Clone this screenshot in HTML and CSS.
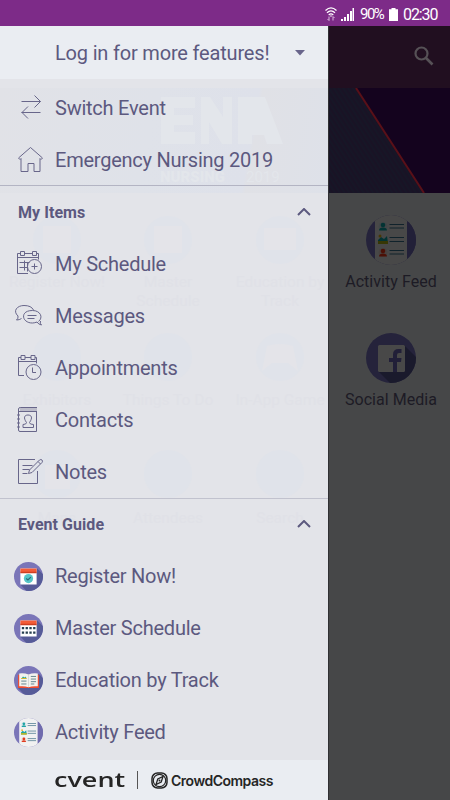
FILE: index.html
```html
<!DOCTYPE html>
<html lang="en">
<head>
  <meta charset="UTF-8" />
  <meta name="viewport" content="width=device-width, initial-scale=1" />
  <title>Emergency Nursing 2019</title>
  <link rel="stylesheet" href="styles.css">
</head>
<body>

  <!-- Shared round icons -->
  <svg class="defs" width="0" height="0">
    <clipPath id="disc"><circle cx="25" cy="25" r="25" /></clipPath>
    <symbol id="feed" viewBox="0 0 50 50">
      <g clip-path="url(#disc)">
        <rect width="50" height="50" fill="#7a75b8" />
        <rect x="9" width="32" height="50" fill="#f1f1f1" />
        <path d="M41 6v38l9-10V12z" fill="#706bad" />
        <circle cx="17" cy="11.5" r="4.5" fill="#dbe6ea" />
        <circle cx="17" cy="10" r="2.3" fill="#20a5a5" />
        <path d="M13 15.5q0-3 4-3t4 3z" fill="#20a5a5" />
        <path d="M12 28v-3l3-3 3 2 3-3 1 7z" fill="#20a5a5" />
        <path d="M12 26h10v3H12z" fill="#b5b52b" />
        <circle cx="14" cy="21" r="1.5" fill="#e6b52a" />
        <circle cx="17" cy="37.5" r="4.5" fill="#ecdcd8" />
        <circle cx="17" cy="36" r="2.3" fill="#e03c20" />
        <path d="M13 41.5q0-3 4-3t4 3z" fill="#e03c20" />
        <path d="M23.5 9.5H38M23.5 13H38M23.5 22.5H38M23.5 26.5H38M23.5 35.5H38M23.5 39H38" stroke="#3f7188" stroke-width="1.2" />
      </g>
    </symbol>
  </svg>

  <!-- Status bar -->
  <div class="status">
    <svg width="14" height="16" viewBox="0 0 14 16" fill="none" stroke="#fff" stroke-width="1.3">
      <path d="M1.500 4.500Q7-.8 12.500 4.500M3 6.700Q7 3 11 6.700M4.700 8.900Q7 7 9.300 8.900" />
      <path d="M5 10.500v4M3.500 13 5 14.500M9 14.500v-4M10.500 12 9 10.500" stroke="#d9b9dd" stroke-width="1" />
      <circle cx="7" cy="10" r=".8" fill="#fff" stroke="none" />
    </svg>
    <svg class="signal" width="13" height="13" viewBox="0 0 13 13" fill="#fff">
      <path d="M0 11h2v2H0zM3 9h2v4H3zM6 6h2v7H6zM9 3h2v10H9zM11.500 0H13v13h-1.500z" />
    </svg>
    <span class="percent">90%</span>
    <svg class="battery" width="9" height="13" viewBox="0 0 9 13" fill="#fff">
      <path d="M2.500 0h4v1.300H9V13H0V1.300h2.500z" />
    </svg>
    <span class="clock">02:30</span>
  </div>

  <div class="screen">

    <!-- Side menu -->
    <nav class="drawer">

      <!-- Home screen showing faintly through the menu -->
      <div class="ghost" aria-hidden="true">
        <div class="ghost-hero"></div>
        <svg width="328" height="734" viewBox="0 26 328 734">
          <g fill="#e3e6eb">
            <path d="M161 97h34v11h-21v7h19v10h-19v7h21v12h-34zM201 97h9l13 20V97h9v47h-10l-13-22v22h-8zM250 97h15l18 47h-16l-3-9h-12v9h-14V97z" />
            <text x="160" y="182" font-size="15" font-weight="900">NURSING</text>
            <text x="246" y="182" font-size="15">2019</text>
          </g>
          <g fill="#e0e3ea">
            <circle cx="57" cy="240" r="24" /><circle cx="168" cy="240" r="24" /><circle cx="280" cy="240" r="24" />
            <circle cx="57" cy="357" r="24" /><circle cx="168" cy="357" r="24" /><circle cx="280" cy="357" r="24" />
            <circle cx="57" cy="474" r="24" /><circle cx="168" cy="474" r="24" /><circle cx="280" cy="474" r="24" />
          </g>
          <g fill="#e4e4e9">
            <path d="M43 226h28v27H43zM154 226h28v27h-28zM264 228h32v22h-32zM262 371l5-25q13-4 26 0l5 25-10-8h-16z" />
            <path d="M45 465h25v24H45z" />
          </g>
          <g fill="#e0e1e7" font-size="15.5" text-anchor="middle">
            <text x="57" y="287">Register Now!</text>
            <text x="168" y="287">Master</text>
            <text x="168" y="306">Schedule</text>
            <text x="280" y="287">Education by</text>
            <text x="280" y="306">Track</text>
            <text x="57" y="405">Exhibitors</text>
            <text x="168" y="405">Things To Do</text>
            <text x="280" y="405">In-App Game</text>
            <text x="57" y="523">Maps</text>
            <text x="168" y="523">Attendees</text>
            <text x="280" y="523">Search</text>
          </g>
        </svg>
      </div>

      <div class="login">
        <span>Log in for more features!</span>
        <svg width="10" height="6" viewBox="0 0 10 6"><path d="M0 0h10L5 5.500z" fill="#68658b" /></svg>
      </div>

      <ul class="top-links">
        <li>
          <svg class="line-icon" viewBox="0 0 32 32">
            <path d="M7.500 9.500h19M20.500 3.500l6 6-6 6M26.500 20.500h-19M14 14.500l-6 6 6 6" />
          </svg>
          <span>Switch Event</span>
        </li>
        <li>
          <svg class="line-icon" viewBox="0 0 32 32">
            <path d="M4.500 14 16.500 3.500 28.500 14l-1.500 1.500-1-1v13h-6v-8h-6v8H7v-13l-1 1z" />
          </svg>
          <span>Emergency Nursing 2019</span>
        </li>
      </ul>

      <div class="heading">
        <span>My Items</span>
        <svg width="14" height="8" viewBox="0 0 14 8"><path d="M1 7l6-6 6 6" /></svg>
      </div>
      <ul class="items">
        <li>
          <svg class="line-icon" viewBox="0 0 32 32">
            <path d="M14 25.500H3.500v-20h3M10.500 5.500h8M22.500 5.500h2v6M3.500 9.500h21M6.500 3.500h4v4h-4zM18.500 3.500h4v4h-4zM5.500 14.500h10M5.500 19.500h8M10.500 12.500v10M13.500 14.500v9" />
            <circle cx="20.500" cy="18.500" r="7" /><path d="M20.500 15.500v6M17.500 18.500h6" />
          </svg>
          <span>My Schedule</span>
        </li>
        <li>
          <svg class="line-icon" viewBox="0 0 32 32">
            <path d="M7.500 18.500q-2 1.500-5 1.500 2-1.500 1.500-4C-1.500 11 3 5.500 10 5.500c5 0 8 1.500 9.500 4.500" />
            <path d="M24.500 21.500c5-4 2-11-6-11S8.500 15 10 18.500s7 6 13 3.500q1.500 2.500 4.500 3-2-1.500-1-4M13.500 15.500h9M13.500 18.500h7" />
          </svg>
          <span>Messages</span>
        </li>
        <li>
          <svg class="line-icon" viewBox="0 0 32 32">
            <path d="M10 23.500H4.500v-18H7M11 5.500h6M21 5.500h1.500v6M4.500 9.500h18M7 3.500h4v4H7zM17 3.500h4v4h-4z" />
            <circle cx="19.500" cy="20" r="7.500" /><path d="M18.500 15.500v5H22" />
          </svg>
          <span>Appointments</span>
        </li>
        <li>
          <svg class="line-icon" viewBox="0 0 32 32">
            <path d="M6 3h17v4H6z" fill="#bdbdca" stroke="none" />
            <path d="M22.500 7v20.500H6q-1.500 0-1.500-1.500V5q0-1.500 2-1.500H23M5 7.500h17.500" />
            <path d="M3 11h3M3 15h3M3 19h3M3 23h3" />
            <path d="M12.500 18.500c-3.500-5-2-7.500 1.500-7.500s5 2.500 1.500 7.500q0 2 4 2v3H9v-3q3.500 0 3.500-2z" />
          </svg>
          <span>Contacts</span>
        </li>
        <li>
          <svg class="line-icon" viewBox="0 0 32 32">
            <path d="M21 3.500H4.500v24h19V15M8.500 9.500h10M8.500 13.500h7M8.500 17.500h5" />
            <path d="M14.500 17.500l1-3.500L25.500 4q1.500-1 2.500 0t0 2.500L18 16.500zM24 5.500l2.500 2.500" />
          </svg>
          <span>Notes</span>
        </li>
      </ul>

      <div class="heading">
        <span>Event Guide</span>
        <svg width="14" height="8" viewBox="0 0 14 8"><path d="M1 7l6-6 6 6" /></svg>
      </div>
      <ul class="items guide">
        <li>
          <svg class="disc" viewBox="0 0 50 50">
            <g clip-path="url(#disc)">
              <rect width="50" height="50" fill="#7a75b8" />
              <path d="M40 11l15 15v28H25L11 39z" fill="#565b98" />
              <path d="M11 11h28v28H11z" fill="#fff" />
              <path d="M11 11h28v7H11z" fill="#f45c38" />
              <path d="M11 17h28v2.500H11z" fill="#cf3f22" />
              <circle cx="25" cy="28.500" r="8" fill="#56c5c8" />
              <path d="M21 28.500l3 2.500 5-5" fill="none" stroke="#286a79" stroke-width="2" />
            </g>
          </svg>
          <span>Register Now!</span>
        </li>
        <li>
          <svg class="disc" viewBox="0 0 50 50">
            <g clip-path="url(#disc)">
              <rect width="50" height="50" fill="#7a75b8" />
              <path d="M40 11l15 15v28H25L11 39z" fill="#565b98" />
              <path d="M11 11h28v28H11z" fill="#fff" />
              <path d="M11 11h28v7H11z" fill="#f45c38" />
              <path d="M11 17h28v2.500H11z" fill="#cf3f22" />
              <path d="M13.500 24.500h24M13.500 32h24" fill="none" stroke="#263e50" stroke-width="4" stroke-dasharray="4 2.500" />
            </g>
          </svg>
          <span>Master Schedule</span>
        </li>
        <li>
          <svg class="disc" viewBox="0 0 50 50">
            <g clip-path="url(#disc)">
              <rect width="50" height="50" fill="#7a75b8" />
              <path d="M43 14l12 12v28H22L7 38z" fill="#565b98" />
              <path d="M7 15h36v23H7z" fill="#f04d30" />
              <path d="M9 13q9-1 16 1.500Q32 12 41 13v22q-9-1-16 1.500Q18 34 9 35z" fill="#f2f2ee" />
              <path d="M25 14v22" stroke="#c3c6c7" />
              <path d="M12.500 22l3-4 3 2 2-2 1 4z" fill="#28a99e" />
              <path d="M12.500 21.500h9" stroke="#d7b52a" stroke-width="2" />
              <path d="M12.500 26h9M12.500 31h9M29 18h9M29 22.500h9M29 27h9M29 31h6" stroke="#66858e" stroke-width="1.700" />
            </g>
          </svg>
          <span>Education by Track</span>
        </li>
        <li>
          <svg class="disc"><use href="#feed" /></svg>
          <span>Activity Feed</span>
        </li>
      </ul>

      <div class="brands">
        <span class="cvent"><b>cvent</b></span>
        <i class="divider"></i>
        <svg width="17" height="17" viewBox="0 0 17 17" fill="none" stroke="#252525">
          <rect x="1" y="1" width="15" height="15" rx="5.500" stroke-width="1.500" />
          <circle cx="8.500" cy="8.500" r="6.200" stroke-width="1.200" />
          <path d="M12 4.500 10.200 10 5 12.500 6.800 7z" stroke-width="1.300" />
          <circle cx="8.500" cy="8.500" r="1" fill="#252525" stroke="none" />
        </svg>
        <span class="crowd">CrowdCompass</span>
      </div>
    </nav>

    <!-- Dimmed home screen -->
    <main class="home">
      <div class="toolbar">
        <svg width="20" height="20" viewBox="0 0 20 20" fill="none" stroke="#565156" stroke-width="2.200">
          <circle cx="7.500" cy="7.500" r="6" /><path d="M12 12l6.500 6.500" stroke-width="2.600" />
        </svg>
      </div>
      <svg class="hero" width="122" height="105" viewBox="0 0 122 105">
        <defs>
          <pattern id="hatch" width="4" height="4" patternUnits="userSpaceOnUse" patternTransform="rotate(-33)">
            <rect width="4" height="4" fill="#191325" />
            <rect width="1.500" height="4" fill="#161727" />
          </pattern>
        </defs>
        <rect width="122" height="105" fill="#14031e" />
        <path d="M0 0h28l68 105H0z" fill="url(#hatch)" />
        <path d="M28 0l68 105" stroke="#591018" stroke-width="2" />
      </svg>
      <div class="tile">
        <svg><use href="#feed" /></svg>
        <span>Activity Feed</span>
      </div>
      <div class="tile">
        <svg viewBox="0 0 50 50">
          <g clip-path="url(#disc)">
            <rect width="50" height="50" fill="#7a75b8" />
            <path d="M38 12l20 20v28H34L12 38z" fill="#565689" />
            <rect x="12" y="12" width="27" height="27" rx="1.500" fill="#f0f0f0" />
            <path d="M27 39V29h-4v-4h4v-3.500q0-5.500 5.500-5.500h3v4H33q-2 0-2 2v3h4.500l-.5 4h-4v10z" fill="#6e69ad" />
          </g>
        </svg>
        <span>Social Media</span>
      </div>
    </main>
  </div>

</body>
</html>
```
FILE: styles.css
```css
* {
  box-sizing: border-box;
}

body {
  margin: 0;
  width: 450px;
  height: 800px;
  overflow: hidden;
  font-family: Roboto, 'Liberation Sans', sans-serif;
  background: #464748;
}

.defs {
  position: absolute;
}

svg {
  display: block;
  flex: none;
}

ul {
  list-style: none;
  margin: 0;
  padding: 0;
}

/* Status bar */
.status {
  height: 26px;
  padding: 2px 12px 0 0;
  display: flex;
  justify-content: flex-end;
  align-items: center;
  background: #7d2b88;
  color: #fff;
  font-size: 16px;
}

.status .signal {
  margin: 0 6px 0 3px;
}

.status .battery {
  margin: 0 5px 0 4px;
}

.percent,
.clock {
  white-space: nowrap;
}

.percent {
  width: 25px;
  font-size: 15px;
  letter-spacing: -1.5px;
}

.clock {
  width: 35px;
  letter-spacing: -1.1px;
}

.screen {
  display: flex;
  height: 774px;
}

/* Side menu */
.drawer {
  position: relative;
  z-index: 0;
  width: 328px;
  background: #e3e4e9;
  color: #5c597f;
  font-size: 20px;
  letter-spacing: -0.24px;
  box-shadow: 1px 0 0 #303033;
}

.ghost {
  position: absolute;
  top: 0;
  left: 0;
  z-index: -1;
  letter-spacing: 0;
}

.ghost svg {
  position: absolute;
  top: 0;
}

.ghost-hero {
  width: 328px;
  height: 105px;
  margin-top: 62px;
  background: linear-gradient(100deg, #e1e2e7, #dfe2e9 45%, #dee1ea 75%, #e0e1e6 76%, #dee1e9);
}

.login {
  height: 53px;
  padding: 0 23px 0 55px;
  display: flex;
  align-items: center;
  justify-content: space-between;
  background: #eaedf2;
  letter-spacing: -0.18px;
}

.top-links {
  height: 107px;
  padding-top: 3px;
  border-bottom: 1px solid #b3b4c3;
}

li {
  height: 52px;
  padding-left: 14px;
  display: flex;
  align-items: center;
  gap: 9px;
}

.line-icon {
  width: 32px;
  height: 32px;
  fill: none;
  stroke: #68668a;
  stroke-width: 1;
}

.disc {
  width: 29px;
  height: 29px;
  margin-right: 3px;
}

.heading {
  height: 52px;
  padding: 0 17px 0 18px;
  display: flex;
  align-items: center;
  justify-content: space-between;
  font-size: 16px;
  font-weight: 700;
  letter-spacing: 0.05px;
}

.heading svg {
  fill: none;
  stroke: #5c597f;
  stroke-width: 2;
}

.items {
  height: 260px;
  box-shadow: 0 1px 0 #c1c2ce;
}

.guide {
  height: 210px;
  box-shadow: none;
}

.brands {
  height: 40px;
  padding-left: 54px;
  display: flex;
  align-items: center;
  background: #eaedf2;
  color: #252525;
}

.cvent {
  width: 71px;
  font: 20px/20px 'Open Sans', sans-serif;
  letter-spacing: 0;
}

.cvent b {
  display: inline-block;
  font-weight: 600;
  transform: scaleX(1.35);
  transform-origin: left;
}

.divider {
  width: 1px;
  height: 18px;
  margin: 0 13px 0 12px;
  background: #555;
}

.crowd {
  margin-left: 3px;
  font: 600 14px Inter, sans-serif;
  letter-spacing: -0.5px;
}

/* Dimmed home screen */
.home {
  width: 122px;
  background: #464748;
  color: #1d1b25;
}

.toolbar {
  height: 62px;
  padding: 20px 16px 0 0;
  display: flex;
  justify-content: flex-end;
  background: #210f20;
}

.tile {
  height: 118px;
  padding-top: 22px;
  display: flex;
  flex-direction: column;
  align-items: center;
  gap: 7px;
  margin-left: 4px;
  font-size: 16px;
  line-height: 20px;
  letter-spacing: 0.05px;
  white-space: nowrap;
}

.tile svg {
  width: 50px;
  height: 50px;
  filter: brightness(0.3) saturate(1.2);
}
```
